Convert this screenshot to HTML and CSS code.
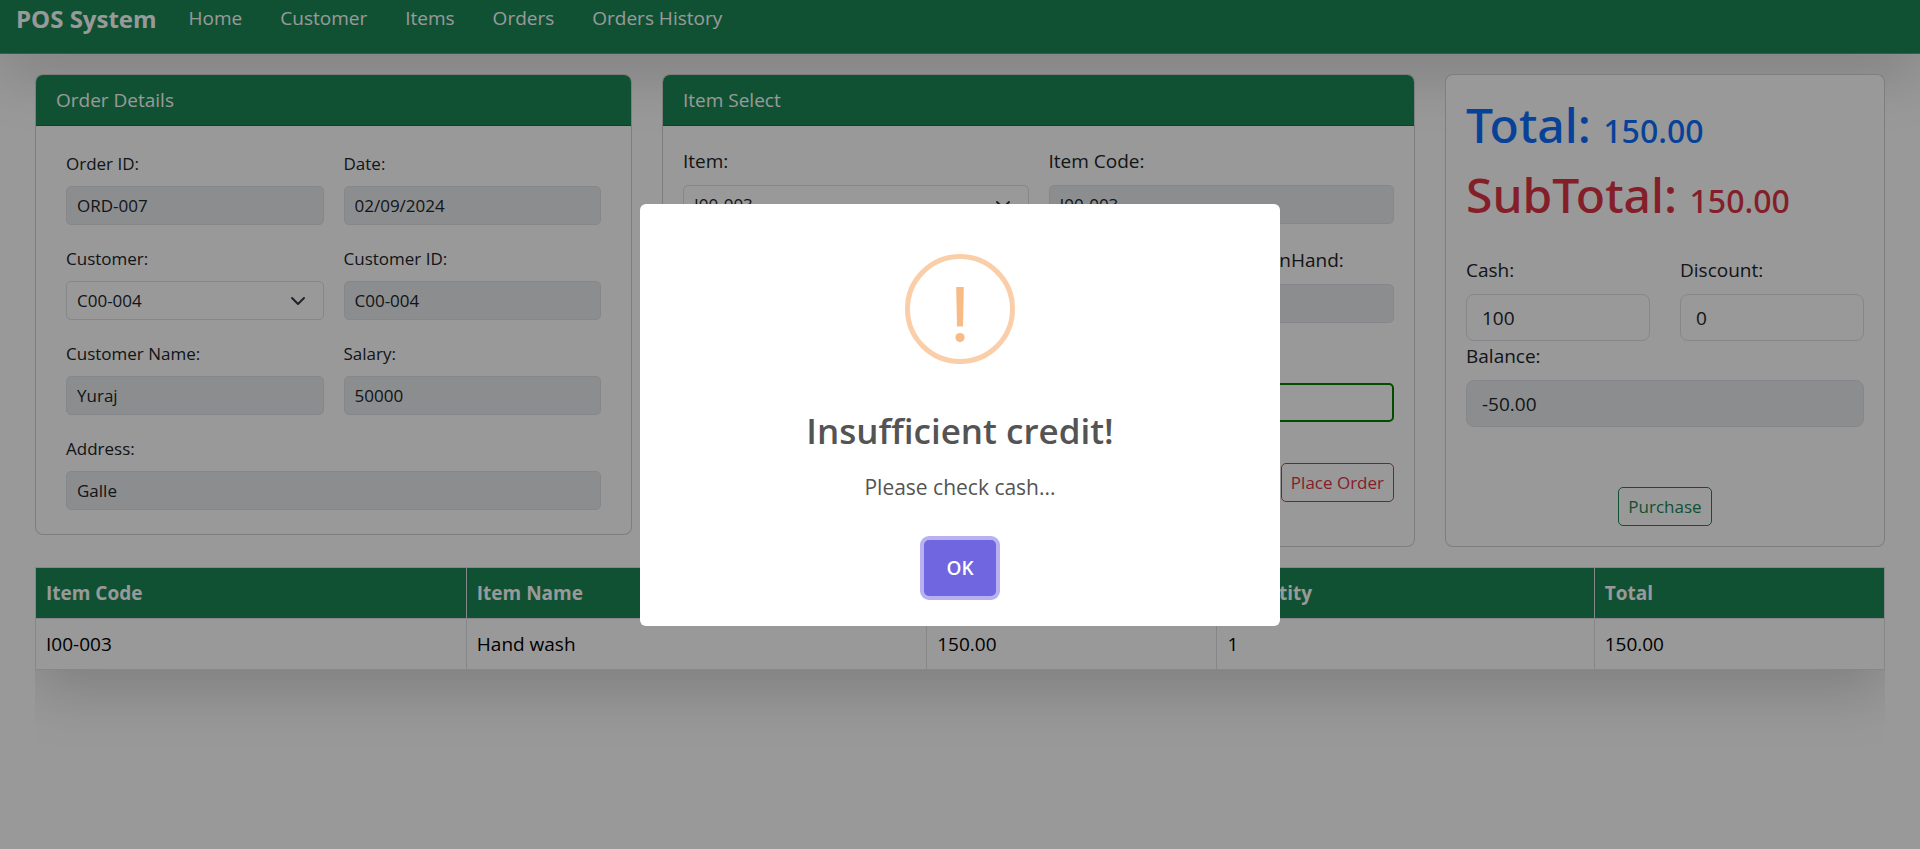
FILE: index.html
```html
<!DOCTYPE html>
<html lang="en">
<head>
<meta charset="utf-8">
<meta name="viewport" content="width=device-width, initial-scale=1">
<title>POS System</title>
<link rel="stylesheet" href="styles.css">
</head>
<body>
<header class="navbar">
  <a class="brand" href="#">POS System</a>
  <nav class="nav-links">
    <a href="#">Home</a>
    <a href="#">Customer</a>
    <a href="#">Items</a>
    <a href="#">Orders</a>
    <a href="#">Orders History</a>
  </nav>
</header>

<main class="page">
  <div class="panels">
    <section class="card card-order">
      <h2 class="card-header">Order Details</h2>
      <form class="order-form">
        <div class="field small"><label for="orderId">Order ID:</label><input id="orderId" type="text" value="ORD-007" disabled></div>
        <div class="field small"><label for="date">Date:</label><input id="date" type="text" value="02/09/2024" disabled></div>
        <div class="field small"><label for="customer">Customer:</label><select id="customer"><option>C00-004</option></select></div>
        <div class="field small"><label for="customerId">Customer ID:</label><input id="customerId" type="text" value="C00-004" disabled></div>
        <div class="field small"><label for="customerName">Customer Name:</label><input id="customerName" type="text" value="Yuraj" disabled></div>
        <div class="field small"><label for="salary">Salary:</label><input id="salary" type="text" value="50000" disabled></div>
        <div class="field small wide"><label for="address">Address:</label><input id="address" type="text" value="Galle" disabled></div>
      </form>
    </section>

    <section class="card">
      <h2 class="card-header">Item Select</h2>
      <form class="item-form">
        <div class="row two">
          <div class="field"><label for="item">Item:</label><select id="item"><option>I00-003</option></select></div>
          <div class="field"><label for="itemCode">Item Code:</label><input id="itemCode" type="text" value="I00-003" disabled></div>
        </div>
        <div class="row three">
          <div class="field"><label for="itemName">Item Name:</label><input id="itemName" type="text" disabled></div>
          <div class="field"><label for="price">Price:</label><input id="price" type="text" disabled></div>
          <div class="field"><label for="onHand">Quantity OnHand:</label><input id="onHand" type="text" disabled></div>
        </div>
        <div class="row">
          <div class="field"><label for="quantity">Quantity:</label><input id="quantity" class="valid" type="text"></div>
        </div>
        <div class="actions"><button class="btn danger" type="button">Place Order</button></div>
      </form>
    </section>

    <section class="card payment">
      <h1 class="sum total">Total: <span>150.00</span></h1>
      <h1 class="sum subtotal">SubTotal: <span>150.00</span></h1>
      <div class="cash-row">
        <div class="field large"><label for="cash">Cash:</label><input id="cash" type="text" value="100"></div>
        <div class="field large"><label for="discount">Discount:</label><input id="discount" type="text" value="0"></div>
      </div>
      <div class="field large"><label for="balance">Balance:</label><input id="balance" type="text" value="-50.00" disabled></div>
      <button class="btn success" type="button">Purchase</button>
    </section>
  </div>

  <div class="table-wrap">
    <table class="cart">
      <colgroup><col class="c-code"><col class="c-name"><col class="c-price"><col class="c-qty"><col class="c-total"></colgroup>
      <thead><tr><th>Item Code</th><th>Item Name</th><th>Price</th><th>Quantity</th><th>Total</th></tr></thead>
      <tbody><tr><td>I00-003</td><td>Hand wash</td><td>150.00</td><td>1</td><td>150.00</td></tr></tbody>
    </table>
  </div>
</main>

<div class="backdrop">
  <div class="dialog" role="dialog" aria-modal="true" aria-labelledby="dialogTitle">
    <svg class="warning" viewBox="0 0 110 110" aria-hidden="true">
      <circle cx="55" cy="55" r="52.5" fill="none" stroke="#facea8" stroke-width="5"/>
      <path d="M51.2 33h7.600l-.8 39.500h-6z" fill="#f8bb86"/>
      <circle cx="55" cy="83.500" r="4.600" fill="#f8bb86"/>
    </svg>
    <h2 class="dialog-title" id="dialogTitle">Insufficient credit!</h2>
    <p class="dialog-text">Please check cash...</p>
    <button class="ok" type="button">OK</button>
  </div>
</div>
</body>
</html>
```
FILE: styles.css
```css
*, *::before, *::after { box-sizing: border-box; }

body {
  margin: 0;
  min-height: 100vh;
  display: flex;
  flex-direction: column;
  font: 400 19px/30px "Open Sans", "Noto Sans", sans-serif;
  color: #212529;
  background: #fff;
}

h1, h2, p { margin: 0; }
input, select, button { font: inherit; color: inherit; }

.navbar {
  display: flex;
  align-items: flex-start;
  gap: 32px;
  height: 54px;
  padding: 2px 16px 0;
  background: #198754;
  border-bottom: 1px solid #5c9c7e;
  box-shadow: 0 20px 60px rgba(0, 0, 0, .175);
  color: #fff;
}
.navbar a { color: inherit; text-decoration: none; }
.brand { font-size: 24px; font-weight: 700; line-height: 34px; }
.nav-links { display: flex; gap: 38px; line-height: 32px; }

.page {
  flex: 1;
  display: flex;
  flex-direction: column;
  gap: 20px;
  padding: 20px 35px 0;
}
.panels {
  display: grid;
  grid-template-columns: 597fr 753fr 440fr;
  gap: 30px;
  align-items: stretch;
}
.card {
  background: #fff;
  border: 1px solid rgba(0, 0, 0, .176);
  border-radius: 8px;
  position: relative;
}
.card-order { align-self: start; }
.card-header {
  padding: 10px 20px;
  font-size: 19px;
  font-weight: 400;
  color: #fff;
  background: #198754;
  border-bottom: 1px solid rgba(0, 0, 0, .176);
  border-radius: 7px 7px 0 0;
}

.field { display: flex; flex-direction: column; gap: 9px; min-width: 0; }
.field input, .field select {
  width: 100%;
  height: 39px;
  padding: 0 10px;
  font-size: 17px;
  background-color: #fff;
  border: 1px solid #dee2e6;
  border-radius: 5px;
}
.field input:disabled { background-color: #e9ecef; opacity: 1; }
.field select {
  appearance: none;
  background-image: url("data:image/svg+xml,%3Csvg xmlns='http://www.w3.org/2000/svg' viewBox='0 0 16 16'%3E%3Cpath fill='none' stroke='%23343a40' stroke-linecap='round' stroke-linejoin='round' stroke-width='2' d='m2 5 6 6 6-6'/%3E%3C/svg%3E");
  background-repeat: no-repeat;
  background-position: right 17px center;
  background-size: 16px 16px;
}
.field input.valid { border: 2px solid green; }
.field.small label { font-size: 17px; line-height: 27px; }
.field.large input { height: 47px; padding: 0 15px; font-size: 19px; border-radius: 8px; }

.order-form {
  display: grid;
  grid-template-columns: 1fr 1fr;
  gap: 20px;
  padding: 24px 30px;
}
.wide { grid-column: 1 / -1; }

.item-form { display: flex; flex-direction: column; gap: 21px; padding: 20px 20px 44px; }
.row { display: grid; gap: 20px; }
.two { grid-template-columns: 1fr 1fr; }
.three { grid-template-columns: 12fr 12fr 11fr; }
.actions { display: flex; justify-content: flex-end; padding-top: 20px; }

.btn {
  height: 39px;
  padding: 0 9px;
  font-size: 17px;
  background: transparent;
  border: 1px solid currentColor;
  border-radius: 5px;
}
.danger { color: #dc3545; }
.success { color: #198754; align-self: center; margin-top: auto; }

.payment { display: flex; flex-direction: column; padding: 20px; }
.sum { font-family: "Noto Sans", sans-serif; font-size: 48px; line-height: 60px; font-weight: 500; margin-bottom: 10px; }
.sum span { font-size: 32px; line-height: 40px; }
.total { color: #0d6efd; }
.subtotal { color: #dc3545; }
.cash-row { display: grid; grid-template-columns: 1fr 1fr; gap: 30px; margin-top: 20px; }

.table-wrap { flex: 1; overflow: hidden; }
.cart {
  width: 100%;
  table-layout: fixed;
  border-collapse: collapse;
  background: #fff;
  color: #000;
  box-shadow: 0 20px 60px rgba(0, 0, 0, .175);
}
.cart th, .cart td { padding: 10px; text-align: left; border: 1px solid #dee2e6; }
.cart th { color: #fff; background: #198754; font-weight: 700; }
.c-code { width: 23.3%; }
.c-name { width: 24.9%; }
.c-price { width: 15.7%; }
.c-qty { width: 20.4%; }
.c-total { width: 15.7%; }

.backdrop {
  position: fixed;
  inset: 0;
  display: flex;
  align-items: center;
  justify-content: center;
  padding-bottom: 19px;
  background: rgba(0, 0, 0, .4);
}
.dialog {
  display: flex;
  flex-direction: column;
  align-items: center;
  width: 640px;
  max-width: 100%;
  padding: 50px 20px 30px;
  background: #fff;
  border-radius: 6px;
  color: #545454;
}
.warning { width: 110px; height: 110px; }
.dialog-title { margin-top: 44px; font-size: 35px; line-height: 46px; font-weight: 600; }
.dialog-text { margin-top: 16px; font-size: 21px; line-height: 34px; }
.ok {
  margin-top: 36px;
  height: 56px;
  padding: 0 22px;
  font-weight: 600;
  color: #fff;
  background: #7066e0;
  border: 0;
  border-radius: 5px;
  box-shadow: 0 0 0 4px rgba(112, 102, 224, .5);
}
```
